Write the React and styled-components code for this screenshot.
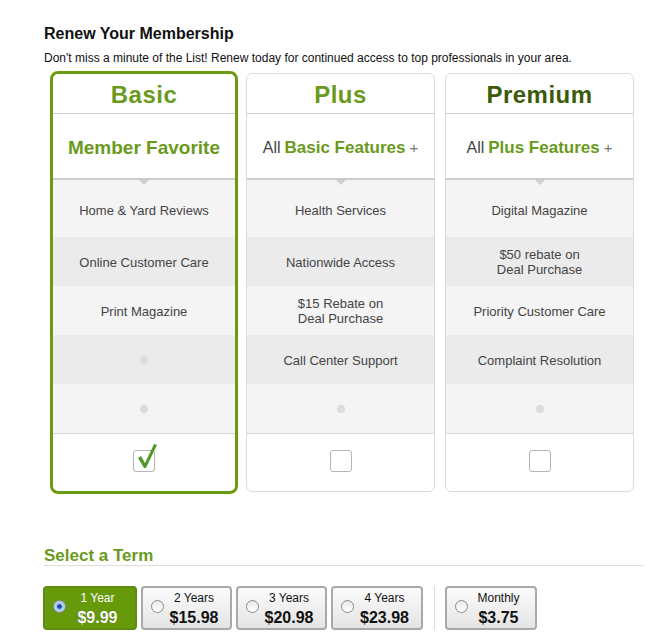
import React from "react";
import styled, { createGlobalStyle } from "styled-components";

const Global = createGlobalStyle`
  html, body { margin: 0; padding: 0; background: #fff; }
  body { font-family: "Liberation Sans", Arial, Helvetica, sans-serif; color: #222; }
`;

const Page = styled.div`
  width: 600px;
  padding: 24px 0 0 44px;
`;

const Heading = styled.h1`
  margin: 0;
  font-size: 16px;
  line-height: 20px;
  font-weight: bold;
  color: #111;
`;

const Intro = styled.p`
  margin: 6px 0 0;
  font-size: 12px;
  line-height: 16px;
  color: #111;
`;

const Cards = styled.div`
  display: flex;
  align-items: center;
  gap: 8px;
  margin: 5px 0 0 6px;
`;

const Card = styled.div`
  box-sizing: border-box;
  width: ${(p) => (p.$active ? 188 : 189)}px;
  margin-left: ${(p) => (p.$last ? "2px" : "0")};
  display: flex;
  flex-direction: column;
  background: #fff;
  border: ${(p) => (p.$active ? "3px solid #6a9c13" : "1px solid #dcdcdc")};
  border-radius: ${(p) => (p.$active ? "8px" : "6px")};
  overflow: hidden;
`;

const Title = styled.div`
  box-sizing: border-box;
  height: 40px;
  padding-top: 3px;
  display: flex;
  align-items: center;
  justify-content: center;
  font-size: 24px;
  font-weight: bold;
  letter-spacing: 0.5px;
  color: ${(p) => (p.$dark ? "#3b5b0b" : "#6a9a1c")};
  border-bottom: 1px solid #cfcfcf;
`;

const Sub = styled.div`
  position: relative;
  box-sizing: border-box;
  height: 66px;
  padding-top: 3px;
  display: flex;
  align-items: center;
  justify-content: center;
  font-size: 16px;
  color: #444;
  border-bottom: 2px solid #cccccc;
  &::after {
    content: "";
    position: absolute;
    left: 50%;
    bottom: -7px;
    margin-left: -5px;
    border-left: 5px solid transparent;
    border-right: 5px solid transparent;
    border-top: 5px solid #d0d0d0;
    z-index: 1;
  }
`;

const Green = styled.b`
  color: #6a9a1c;
  font-size: ${(p) => (p.$big ? "19px" : "17px")};
  margin: 0 4px;
`;

const Plus = styled.span`
  color: #777;
  font-size: 15px;
`;

const Feature = styled.div`
  box-sizing: border-box;
  height: ${(p) => (p.$first ? "57px" : "49px")};
  padding-top: ${(p) => (p.$first ? "4px" : "1px")};
  display: flex;
  align-items: center;
  justify-content: center;
  text-align: center;
  font-size: 13px;
  line-height: 15px;
  color: #444;
  background: ${(p) => (p.$alt ? "#ebebeb" : "#f4f4f4")};
`;

const Dot = styled.span`
  width: 8px;
  height: 8px;
  border-radius: 50%;
  background: #dcdcdc;
`;

const Foot = styled.div`
  box-sizing: border-box;
  height: 58px;
  padding-bottom: 3px;
  border-top: 1px solid #d8d8d8;
  display: flex;
  align-items: center;
  justify-content: center;
`;

const Box = styled.span`
  position: relative;
  box-sizing: border-box;
  width: 22px;
  height: 22px;
  border: 1px solid #b5b5b5;
  border-radius: 3px;
  background: #fff;
  & svg {
    position: absolute;
    left: 2px;
    top: -8px;
  }
`;

const TermHead = styled.h2`
  margin: 53px 0 0;
  font-size: 17px;
  line-height: 18px;
  font-weight: bold;
  color: #6a9a1c;
  border-bottom: 1px solid #dddddd;
`;

const Terms = styled.div`
  display: flex;
  align-items: stretch;
  gap: 4px;
  margin: 20px 0 0 -1px;
`;

const Term = styled.div`
  box-sizing: border-box;
  width: ${(p) => p.$w}px;
  height: 44px;
  display: flex;
  align-items: center;
  padding: 0 6px 0 8px;
  border: 2px solid ${(p) => (p.$on ? "#5f8d10" : "#a9a9a9")};
  border-radius: 4px;
  background: ${(p) => (p.$on ? "#669a0b" : "linear-gradient(#fbfbfb, #e4e4e4)")};
  color: ${(p) => (p.$on ? "#fff" : "#111")};
`;

const Radio = styled.span`
  box-sizing: border-box;
  flex: none;
  width: 13px;
  height: 13px;
  border-radius: 50%;
  margin-top: -3px;
  border: 1px solid #8a8a8a;
  background: ${(p) =>
    p.$on
      ? "radial-gradient(circle, #1d4f9a 0 2px, #9cc3ee 2.5px, #cfe2f7 100%)"
      : "linear-gradient(#e8e8e8, #ffffff)"};
`;

const TermText = styled.div`
  flex: 1;
  padding-top: 2px;
  display: flex;
  flex-direction: column;
  align-items: center;
`;

const TermLabel = styled.span`
  font-size: 12px;
  line-height: 14px;
`;

const Price = styled.span`
  margin-top: 4px;
  font-size: 16px;
  line-height: 18px;
  font-weight: bold;
  text-shadow: ${(p) => (p.$on ? "0 0 1px rgba(0,0,0,0.5)" : "none")};
`;

const Sep = styled.span`
  width: 1px;
  background: #dddddd;
  margin: 0 6px 0 7px;
`;

const plans = [
  {
    name: "Basic",
    active: true,
    sub: <Green $big>Member Favorite</Green>,
    features: ["Home & Yard Reviews", "Online Customer Care", "Print Magazine", null, null],
  },
  {
    name: "Plus",
    sub: (
      <>
        All<Green>Basic Features</Green>
        <Plus>+</Plus>
      </>
    ),
    features: [
      "Health Services",
      "Nationwide Access",
      <>$15 Rebate on<br />Deal Purchase</>,
      "Call Center Support",
      null,
    ],
  },
  {
    name: "Premium",
    dark: true,
    last: true,
    sub: (
      <>
        All<Green>Plus Features</Green>
        <Plus>+</Plus>
      </>
    ),
    features: [
      "Digital Magazine",
      <>$50 rebate on<br />Deal Purchase</>,
      "Priority Customer Care",
      "Complaint Resolution",
      null,
    ],
  },
];

const terms = [
  { label: "1 Year", price: "$9.99", w: 94, on: true },
  { label: "2 Years", price: "$15.98", w: 91 },
  { label: "3 Years", price: "$20.98", w: 91 },
  { label: "4 Years", price: "$23.98", w: 92 },
];

function TermButton({ t }) {
  return (
    <Term $w={t.w} $on={t.on}>
      <Radio $on={t.on} />
      <TermText>
        <TermLabel>{t.label}</TermLabel>
        <Price $on={t.on}>{t.price}</Price>
      </TermText>
    </Term>
  );
}

export default function App() {
  return (
    <Page>
      <Global />
      <Heading>Renew Your Membership</Heading>
      <Intro>Don't miss a minute of the List! Renew today for continued access to top professionals in your area.</Intro>
      <Cards>
        {plans.map((p) => (
          <Card key={p.name} $active={p.active} $last={p.last}>
            <Title $dark={p.dark}>{p.name}</Title>
            <Sub>{p.sub}</Sub>
            {p.features.map((f, i) => (
              <Feature key={i} $first={i === 0} $alt={i % 2 === 1}>
                {f === null ? <Dot /> : f}
              </Feature>
            ))}
            <Foot>
              <Box>
                {p.active && (
                  <svg width="22" height="26" viewBox="0 0 22 26">
                    <path
                      d="M2 15 L5 13 L9 20 L18 1 L21 2 L10 25 L8 25 Z"
                      fill="#4f9a2a"
                    />
                  </svg>
                )}
              </Box>
            </Foot>
          </Card>
        ))}
      </Cards>
      <TermHead>Select a Term</TermHead>
      <Terms>
        {terms.map((t) => (
          <TermButton key={t.label} t={t} />
        ))}
        <Sep />
        <TermButton t={{ label: "Monthly", price: "$3.75", w: 92 }} />
      </Terms>
    </Page>
  );
}
